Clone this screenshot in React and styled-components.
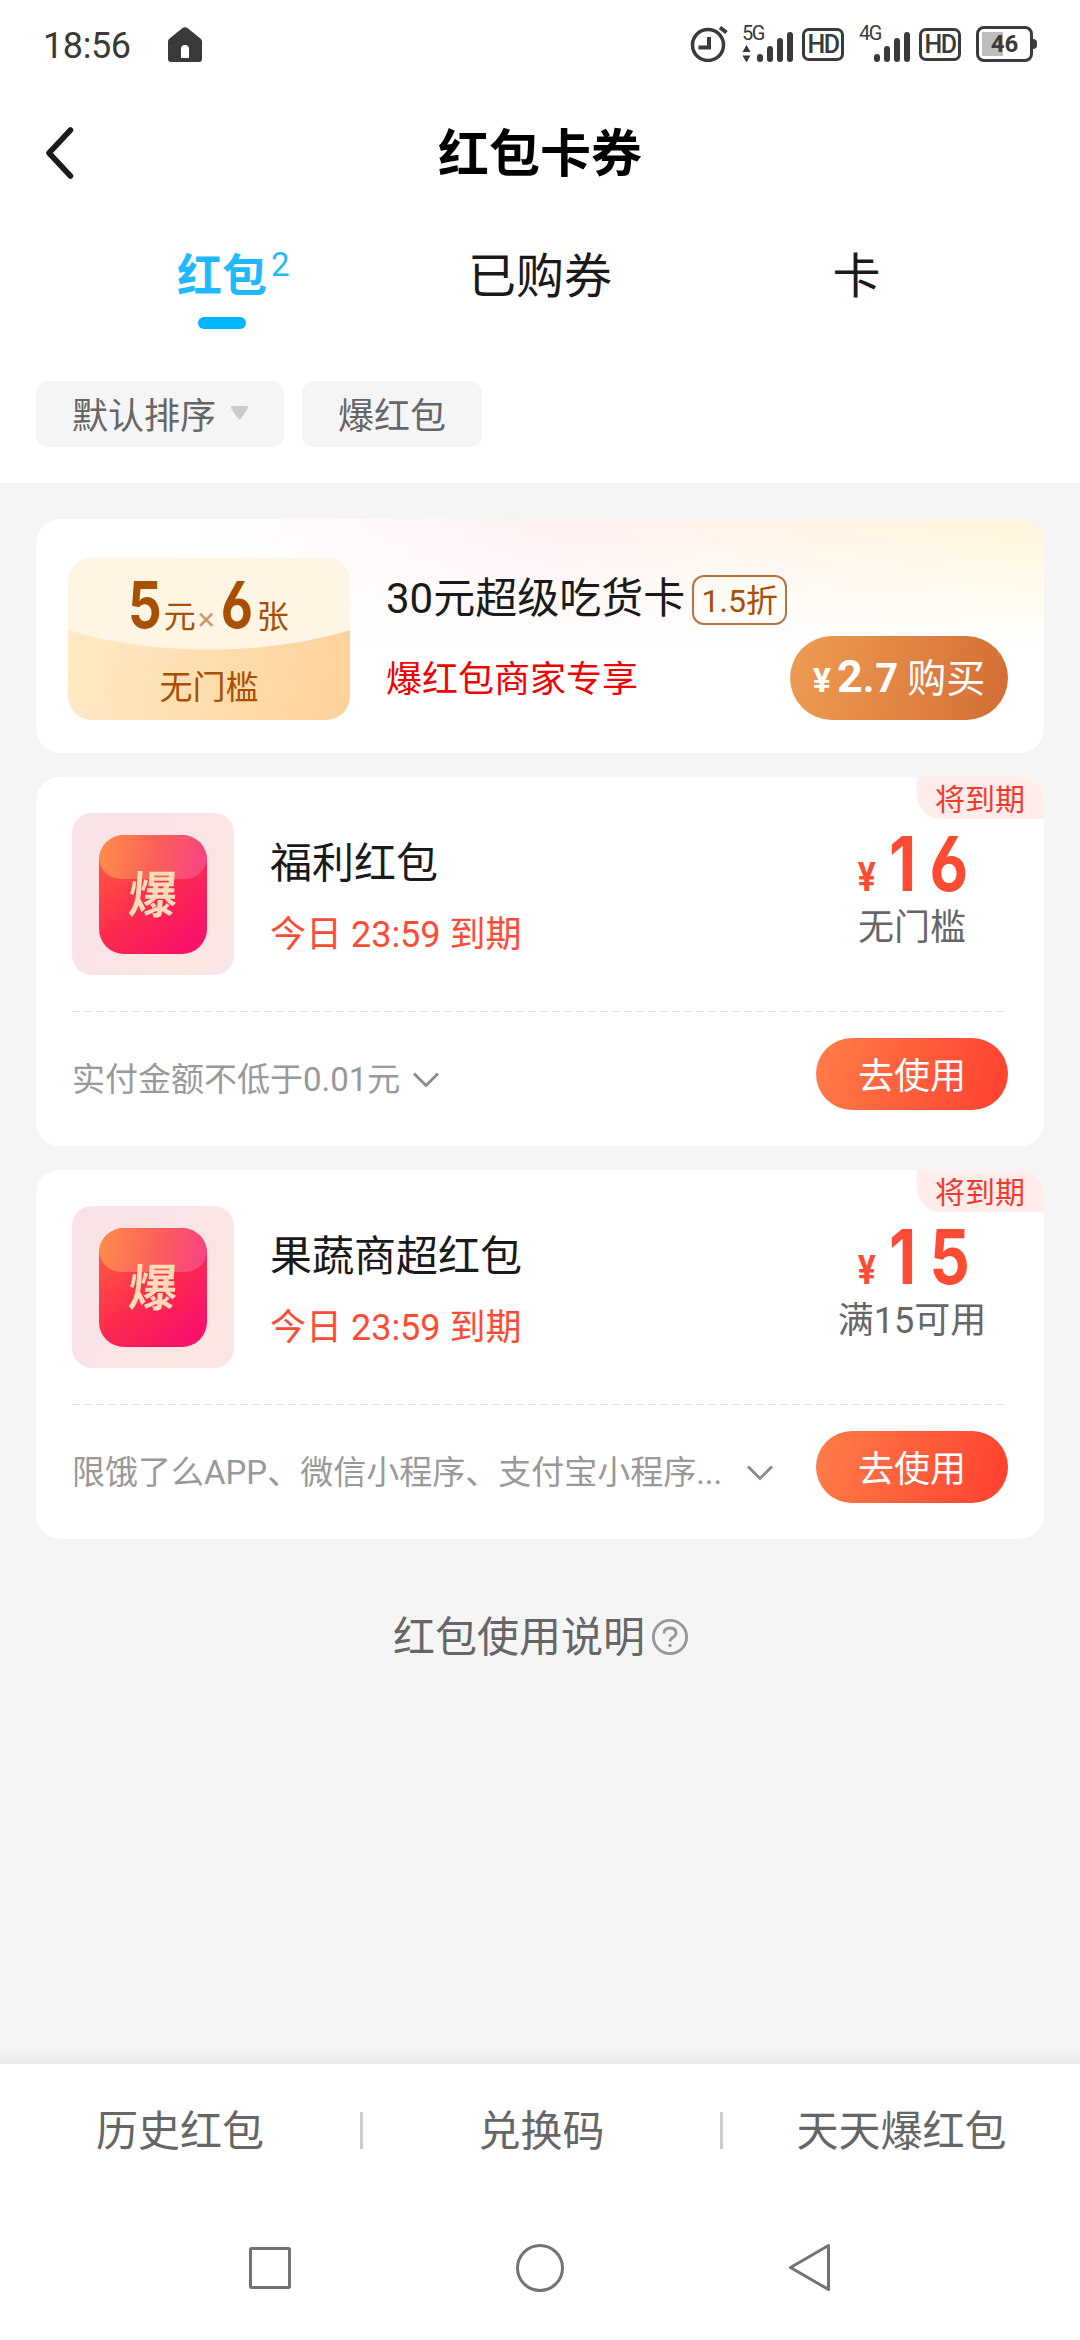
import React from "react";
import styled, { createGlobalStyle } from "styled-components";

const GlobalStyle = createGlobalStyle`
  * { box-sizing: border-box; }
  body {
    margin: 0;
    background: #f5f5f5;
    font-family: Roboto, "Noto Sans CJK SC", sans-serif;
    color: #1a1a1a;
  }
  button { border: 0; padding: 0; background: none; font: inherit; color: inherit; }
  svg { display: block; flex: none; }
`;

const INK = "#383b38";

const Screen = styled.div`
  width: 1080px;
  height: 2340px;
  display: flex;
  flex-direction: column;
  overflow: hidden;
`;

const Header = styled.header`
  height: 483px;
  flex: none;
  background: #fff;
`;

/* ---------- status bar ---------- */
const StatusBar = styled.div`
  height: 88px;
  padding: 0 43px 0 43px;
  display: flex;
  align-items: center;
  color: ${INK};
`;
const Clock = styled.span`
  font-size: 36px;
  line-height: 42px;
  padding-top: 4px;
  width: 125px;
  letter-spacing: -0.4px;
`;
const StatusIcons = styled.div`
  margin-left: auto;
  display: flex;
  align-items: center;
  height: 36px;
`;
const Signal = styled.div`
  width: 52px;
  height: 36px;
  margin-left: ${(p) => p.$gap}px;
  display: grid;
  grid-template-areas: "stack";
`;
const Generation = styled.span`
  grid-area: stack;
  font-size: 20px;
  line-height: 14px;
  letter-spacing: -1.6px;
`;
const Bars = styled.svg`
  grid-area: stack;
`;
const HdBox = styled.span`
  width: 42px;
  height: 33px;
  margin-left: 8px;
  border: 3px solid ${INK};
  border-radius: 7px;
  display: flex;
  align-items: center;
  justify-content: center;
  font-size: 25px;
  font-weight: 500;
  line-height: 27px;
  letter-spacing: -1.6px;
`;
const Battery = styled.div`
  margin-left: 15px;
  display: flex;
  align-items: center;
`;
const BatteryBody = styled.span`
  width: 57px;
  height: 36px;
  border: 3px solid ${INK};
  border-radius: 8px;
  display: flex;
  align-items: center;
  justify-content: center;
  font-size: 24px;
  font-weight: 700;
  background: linear-gradient(#bdbdbd, #bdbdbd) 3px 3px / 21px 24px no-repeat;
`;
const BatteryTip = styled.span`
  width: 4px;
  height: 10px;
  border-radius: 0 4px 4px 0;
  background: ${INK};
`;

/* ---------- title bar ---------- */
const TitleBar = styled.div`
  height: 130px;
  margin-bottom: 2px;
  padding: 0 44px;
  display: grid;
  grid-template-columns: 60px 1fr 60px;
  align-items: center;
`;
const Title = styled.h1`
  margin: 0;
  padding-top: 4px;
  text-align: center;
  font-size: 51px;
  line-height: 60px;
  font-weight: 700;
  color: #000;
`;

/* ---------- tabs ---------- */
const Tabs = styled.nav`
  height: 161px;
  padding: 27px 66px 0 63px;
  display: grid;
  grid-template-columns: 318px 318px 315px;
`;
const Tab = styled.button`
  height: 84px;
  display: flex;
  flex-direction: column;
  align-items: center;
  font-size: ${(p) => (p.$active ? 45 : 48)}px;
  font-weight: ${(p) => (p.$active ? 700 : 400)};
  line-height: 60px;
  color: ${(p) => (p.$active ? "#1fb9ff" : "#1a1a1a")};
`;
const TabLabel = styled.span`
  position: relative;
`;
const TabCount = styled.sup`
  position: absolute;
  left: calc(100% + 4px);
  top: 0;
  font-size: 33px;
  line-height: 36px;
  font-weight: 400;
`;
const TabLine = styled.span`
  width: 48px;
  height: 12px;
  margin-top: 10px;
  border-radius: 6px;
  background: #00b5ff;
`;

/* ---------- filter chips ---------- */
const Chips = styled.div`
  padding-left: 36px;
  display: flex;
  gap: 18px;
`;
const Chip = styled.button`
  height: 66px;
  padding: 0 36px 2px;
  border-radius: 12px;
  background: #f5f5f5;
  display: flex;
  align-items: center;
  gap: 15px;
  font-size: 36px;
  color: #666;
`;

/* ---------- list ---------- */
const List = styled.main`
  flex: 1;
  padding: 36px 36px 0;
  display: flex;
  flex-direction: column;
  gap: 24px;
`;

const Promo = styled.section`
  height: 234px;
  flex: none;
  padding: 39px 36px 33px 32px;
  border-radius: 24px;
  display: flex;
  background:
    linear-gradient(to bottom, rgba(255, 255, 255, 0), #fff 56%),
    linear-gradient(97deg, #fff 14%, #fff1f2 50%, #fff4e8 70%, #fff6da 98%);
`;
const Voucher = styled.div`
  width: 282px;
  height: 162px;
  flex: none;
  border-radius: 24px;
  display: flex;
  flex-direction: column;
  align-items: center;
  color: #a65000;
  background:
    radial-gradient(ellipse 268px 130px at 50% -38px, #fff5e5 99.4%, rgba(255, 245, 229, 0) 100%),
    linear-gradient(100deg, #ffebc8, #ffd199);
`;
const VoucherTop = styled.div`
  height: 92px;
  padding: 14px 3px 0 0;
  display: flex;
  align-items: baseline;
  font-size: 32px;
  line-height: 66px;
`;
const Num = styled.span`
  font-family: Inter, sans-serif;
  font-feature-settings: "cv03", "cv04";
  font-weight: 700;
  font-size: ${(p) => p.$size}px;
  display: inline-block;
  transform: scaleX(${(p) => p.$squeeze || 0.84});
  transform-origin: ${(p) => (p.$track ? "left" : "center")};
  letter-spacing: ${(p) => p.$track || 0}px;
  margin: 0 ${(p) => p.$pull || 0}px;
`;
const Times = styled.span`
  width: 21px;
  opacity: 0.55;
  align-self: center;
  padding: 16px 0 0 2px;
`;
const VoucherRule = styled.div`
  padding-top: 16px;
  font-size: 33px;
  line-height: 44px;
`;
const PromoInfo = styled.div`
  flex: 1;
  margin-left: 36px;
  display: flex;
  flex-direction: column;
`;
const PromoTitle = styled.div`
  height: 83px;
  display: flex;
  align-items: center;
  font-size: 42px;
  line-height: 50px;
  white-space: nowrap;
`;
const PromoName = styled.span`
  padding-bottom: 1px;
`;
const Discount = styled.span`
  width: 95px;
  height: 50px;
  margin-left: 7px;
  border: 2px solid #b87440;
  border-radius: 12px;
  font-size: 32px;
  line-height: 48px;
  text-align: center;
  color: #a65000;
`;
const PromoLine = styled.div`
  display: flex;
  justify-content: space-between;
  font-size: 36px;
  line-height: 78px;
  color: #f20000;
  white-space: nowrap;
`;
const Buy = styled.button`
  width: 218px;
  height: 84px;
  margin-top: -5px;
  border-radius: 42px;
  background: linear-gradient(100deg, #ee9d53, #d46d35);
  color: #fff;
  display: flex;
  align-items: baseline;
  justify-content: center;
  font-size: 39px;
  line-height: 81px;
`;
const BuyPrice = styled.b`
  font-size: ${(p) => p.$size}px;
  margin-right: ${(p) => p.$after}px;
  letter-spacing: ${(p) => p.$track || 0}px;
`;

const Coupon = styled.section`
  height: 369px;
  flex: none;
  position: relative;
  padding: 36px;
  border-radius: 24px;
  background: #fff;
  overflow: hidden;
`;
const Expiring = styled.span`
  position: absolute;
  top: 0;
  right: 0;
  width: 127px;
  height: 42px;
  padding-left: 18px;
  border-radius: 0 24px 0 24px;
  background: #ffeceb;
  font-size: 30px;
  line-height: 45px;
  color: #f23a2c;
`;
const CouponTop = styled.div`
  height: 162px;
  display: flex;
`;
const IconTile = styled.div`
  width: 162px;
  height: 162px;
  border-radius: 20px;
  display: flex;
  align-items: center;
  justify-content: center;
  background: linear-gradient(120deg, #f9e3e6 40%, #fbe6e1 80%, #fae5e8);
`;
const Burst = styled.div`
  width: 108px;
  height: 119px;
  border-radius: 25px;
  overflow: hidden;
  display: grid;
  place-items: center;
  background: linear-gradient(140deg, #ff5540 15%, #fd2c4e 50%, #f81268 88%);
`;
const BurstShine = styled.span`
  grid-area: 1 / 1;
  align-self: start;
  width: 108px;
  height: 44px;
  border-radius: 0 0 22px 22px;
  background: linear-gradient(100deg, #ff8a4c 5%, #fb6258 50%, #f8467f 92%);
`;
const BurstText = styled.span`
  grid-area: 1 / 1;
  font-size: 50px;
  line-height: 56px;
  padding-top: 4px;
  font-weight: 700;
  color: #ffdcb8;
  transform: skewX(-4deg) scaleX(0.97);
`;
const CouponInfo = styled.div`
  margin-left: 36px;
  flex: 1;
  padding-top: 20px;
`;
const CouponTitle = styled.div`
  font-size: 42px;
  line-height: 62px;
`;
const Deadline = styled.div`
  margin-top: 12px;
  font-size: 36px;
  line-height: 56px;
  color: #ff4b33;
`;
const Price = styled.div`
  width: 192px;
  display: flex;
  flex-direction: column;
  align-items: center;
`;
const Amount = styled.div`
  width: 112px;
  height: 90px;
  display: flex;
  align-items: baseline;
  line-height: 100px;
  color: #ff4b33;
`;
const Yen = styled.b`
  width: 33px;
  padding-left: 2px;
  flex: none;
  font-size: 40px;
  transform: scaleX(0.84);
  transform-origin: left;
`;
const Condition = styled.div`
  font-size: 36px;
  line-height: 50px;
  color: #666;
`;
const Dashes = styled.div`
  height: 1px;
  margin-top: 36px;
  background: repeating-linear-gradient(to right, #dedede 0 8px, #fff 8px 12px);
`;
const CouponFoot = styled.div`
  height: 72px;
  margin-top: 26px;
  display: flex;
  align-items: center;
  justify-content: space-between;
`;
const Note = styled.div`
  display: flex;
  align-items: center;
  gap: ${(p) => p.$gap}px;
  font-size: 33px;
  line-height: 48px;
  padding-top: 12px;
  color: #999;
  white-space: nowrap;
`;
const Use = styled.button`
  width: 192px;
  height: 72px;
  padding-bottom: 2px;
  border-radius: 36px;
  background: linear-gradient(105deg, #ff7a47 5%, #ff4330 95%);
  color: #fff;
  font-size: 36px;
`;
const Help = styled.div`
  height: 60px;
  margin-top: 44px;
  padding-left: 2px;
  display: flex;
  align-items: center;
  justify-content: center;
  gap: 6px;
  font-size: 42px;
  line-height: 54px;
  color: #666;
`;
const HelpText = styled.span`
  padding-top: 2px;
`;

/* ---------- bottom ---------- */
const Shade = styled.div`
  height: 15px;
  background: linear-gradient(#f5f5f5, #e9e9e9);
`;
const Footer = styled.footer`
  height: 276px;
  flex: none;
  background: #fff;
`;
const Links = styled.div`
  height: 132px;
  display: grid;
  grid-template-columns: 363px 360px 357px;
  align-items: center;
`;
const LinkItem = styled.button`
  height: 37px;
  padding-bottom: 6px;
  display: flex;
  align-items: center;
  justify-content: center;
  font-size: 42px;
  color: #666;
  border-right: ${(p) => (p.$last ? 0 : 3)}px solid #ccc;
`;
const SystemNav = styled.div`
  height: 144px;
  padding: 0 135px;
  display: grid;
  grid-template-columns: repeat(3, 1fr);
  justify-items: center;
  align-items: center;
`;

const SignalBars = ({ arrows }) => (
  <Bars width="52" height="36" viewBox="0 0 52 36" fill={INK}>
    {arrows && <path d="M4.500 19l4 7h-8zM4.500 36.500l4-7h-8z" />}
    <rect x="15" y="28" width="6" height="8" rx="3" />
    <rect x="25" y="20" width="6" height="16" rx="3" />
    <rect x="35" y="12" width="6" height="24" rx="3" />
    <rect x="45" y="6" width="6" height="30" rx="3" />
  </Bars>
);

const Chevron = () => (
  <svg width="28" height="18" viewBox="0 0 28 18" fill="none" stroke="#8c8c8c" strokeWidth="3">
    <path d="M2 2.500L14 14.500L26 2.500" />
  </svg>
);

const coupons = [
  { title: "福利红包", amount: "16", condition: "无门槛", note: "实付金额不低于0.01元", gap: 12 },
  {
    title: "果蔬商超红包",
    amount: "15",
    condition: "满15可用",
    note: "限饿了么APP、微信小程序、支付宝小程序...",
    gap: 24,
  },
];

const CouponCard = ({ title, amount, condition, note, gap }) => (
  <Coupon>
    <Expiring>将到期</Expiring>
    <CouponTop>
      <IconTile>
        <Burst>
          <BurstShine />
          <BurstText>爆</BurstText>
        </Burst>
      </IconTile>
      <CouponInfo>
        <CouponTitle>{title}</CouponTitle>
        <Deadline>今日 23:59 到期</Deadline>
      </CouponInfo>
      <Price>
        <Amount>
          <Yen>¥</Yen>
          <Num $size={76} $squeeze={0.83} $track={16}>{amount}</Num>
        </Amount>
        <Condition>{condition}</Condition>
      </Price>
    </CouponTop>
    <Dashes />
    <CouponFoot>
      <Note $gap={gap}>
        <span>{note}</span>
        <Chevron />
      </Note>
      <Use>去使用</Use>
    </CouponFoot>
  </Coupon>
);

export default function App() {
  return (
    <>
      <GlobalStyle />
      <Screen>
        <Header>
          <StatusBar>
            <Clock>18:56</Clock>
            <svg width="34" height="35" viewBox="0 0 34 35">
              <path
                fill={INK}
                fillRule="evenodd"
                d="M14.500 1Q17 -.5 19.500 1L33 12Q34 13 34 14.500V32Q34 35 31 35H3Q0 35 0 32V14.500Q0 13 1 12ZM13 31h8v-9q0-4-4-4t-4 4z"
              />
            </svg>
            <StatusIcons>
              <svg width="38" height="36" viewBox="0 0 38 36" fill="none" stroke={INK} strokeWidth="3.500">
                <circle cx="18" cy="19" r="15.500" />
                <path d="M19 11v10.500H8.500M30 1.500l6.500 5" strokeWidth="4" />
              </svg>
              <Signal $gap={14}>
                <Generation>5G</Generation>
                <SignalBars arrows />
              </Signal>
              <HdBox>HD</HdBox>
              <Signal $gap={15}>
                <Generation>4G</Generation>
                <SignalBars />
              </Signal>
              <HdBox>HD</HdBox>
              <Battery>
                <BatteryBody>46</BatteryBody>
                <BatteryTip />
              </Battery>
            </StatusIcons>
          </StatusBar>
          <TitleBar>
            <svg width="32" height="52" viewBox="0 0 32 52" fill="none" stroke="#1a1a1a" strokeWidth="5.500" strokeLinecap="round" strokeLinejoin="round">
              <path d="M26.500 3L5 26L26.500 49" />
            </svg>
            <Title>红包卡券</Title>
          </TitleBar>
          <Tabs>
            <Tab $active>
              <TabLabel>
                红包<TabCount>2</TabCount>
              </TabLabel>
              <TabLine />
            </Tab>
            <Tab>已购券</Tab>
            <Tab>卡</Tab>
          </Tabs>
          <Chips>
            <Chip>
              默认排序
              <svg width="17" height="14" viewBox="0 0 17 14" fill="#c8cccb">
                <path d="M2 0H15Q18 0 16.500 3L10.500 12Q8.500 15 6.500 12L.5 3Q-1 0 2 0Z" />
              </svg>
            </Chip>
            <Chip>爆红包</Chip>
          </Chips>
        </Header>

        <List>
          <Promo>
            <Voucher>
              <VoucherTop>
                <Num $size={65} $squeeze={0.81} $pull={-2}>5</Num>元<Times>×</Times>
                <Num $size={65} $squeeze={0.81} $pull={0}>6</Num>张
              </VoucherTop>
              <VoucherRule>无门槛</VoucherRule>
            </Voucher>
            <PromoInfo>
              <PromoTitle>
                <PromoName>30元超级吃货卡</PromoName>
                <Discount>1.5折</Discount>
              </PromoTitle>
              <PromoLine>
                爆红包商家专享
                <Buy>
                  <BuyPrice $size={34} $after={6}>¥</BuyPrice>
                  <BuyPrice $size={45} $after={0}>2</BuyPrice>
                  <BuyPrice $size={40} $after={8} $track={1}>.7</BuyPrice>
                  购买
                </Buy>
              </PromoLine>
            </PromoInfo>
          </Promo>
          {coupons.map((c) => (
            <CouponCard key={c.title} {...c} />
          ))}
          <Help>
            <HelpText>红包使用说明</HelpText>
            <svg width="38" height="38" viewBox="0 0 38 38" fill="none" stroke="#969696" strokeWidth="2.800">
              <circle cx="19" cy="19" r="16.600" />
              <path d="M13 15.500Q13 10 19 10T25 15Q25 17.500 22 19.200Q19 21 19 23.500" />
              <circle cx="19" cy="27.500" r="1.300" fill="#969696" strokeWidth="1" />
            </svg>
          </Help>
        </List>

        <Shade />
        <Footer>
          <Links>
            <LinkItem>历史红包</LinkItem>
            <LinkItem>兑换码</LinkItem>
            <LinkItem $last>天天爆红包</LinkItem>
          </Links>
          <SystemNav>
            <svg width="44" height="44" viewBox="0 0 44 44" fill="none" stroke="#737373" strokeWidth="3">
              <rect x="2.500" y="2.500" width="39" height="39" rx="1" />
            </svg>
            <svg width="50" height="50" viewBox="0 0 50 50" fill="none" stroke="#737373" strokeWidth="3">
              <circle cx="25" cy="25" r="22.500" />
            </svg>
            <svg width="44" height="50" viewBox="0 0 44 50" fill="none" stroke="#737373" strokeWidth="3" strokeLinejoin="round">
              <path d="M2.500 24.500L40.500 2.500V46.500Z" />
            </svg>
          </SystemNav>
        </Footer>
      </Screen>
    </>
  );
}
